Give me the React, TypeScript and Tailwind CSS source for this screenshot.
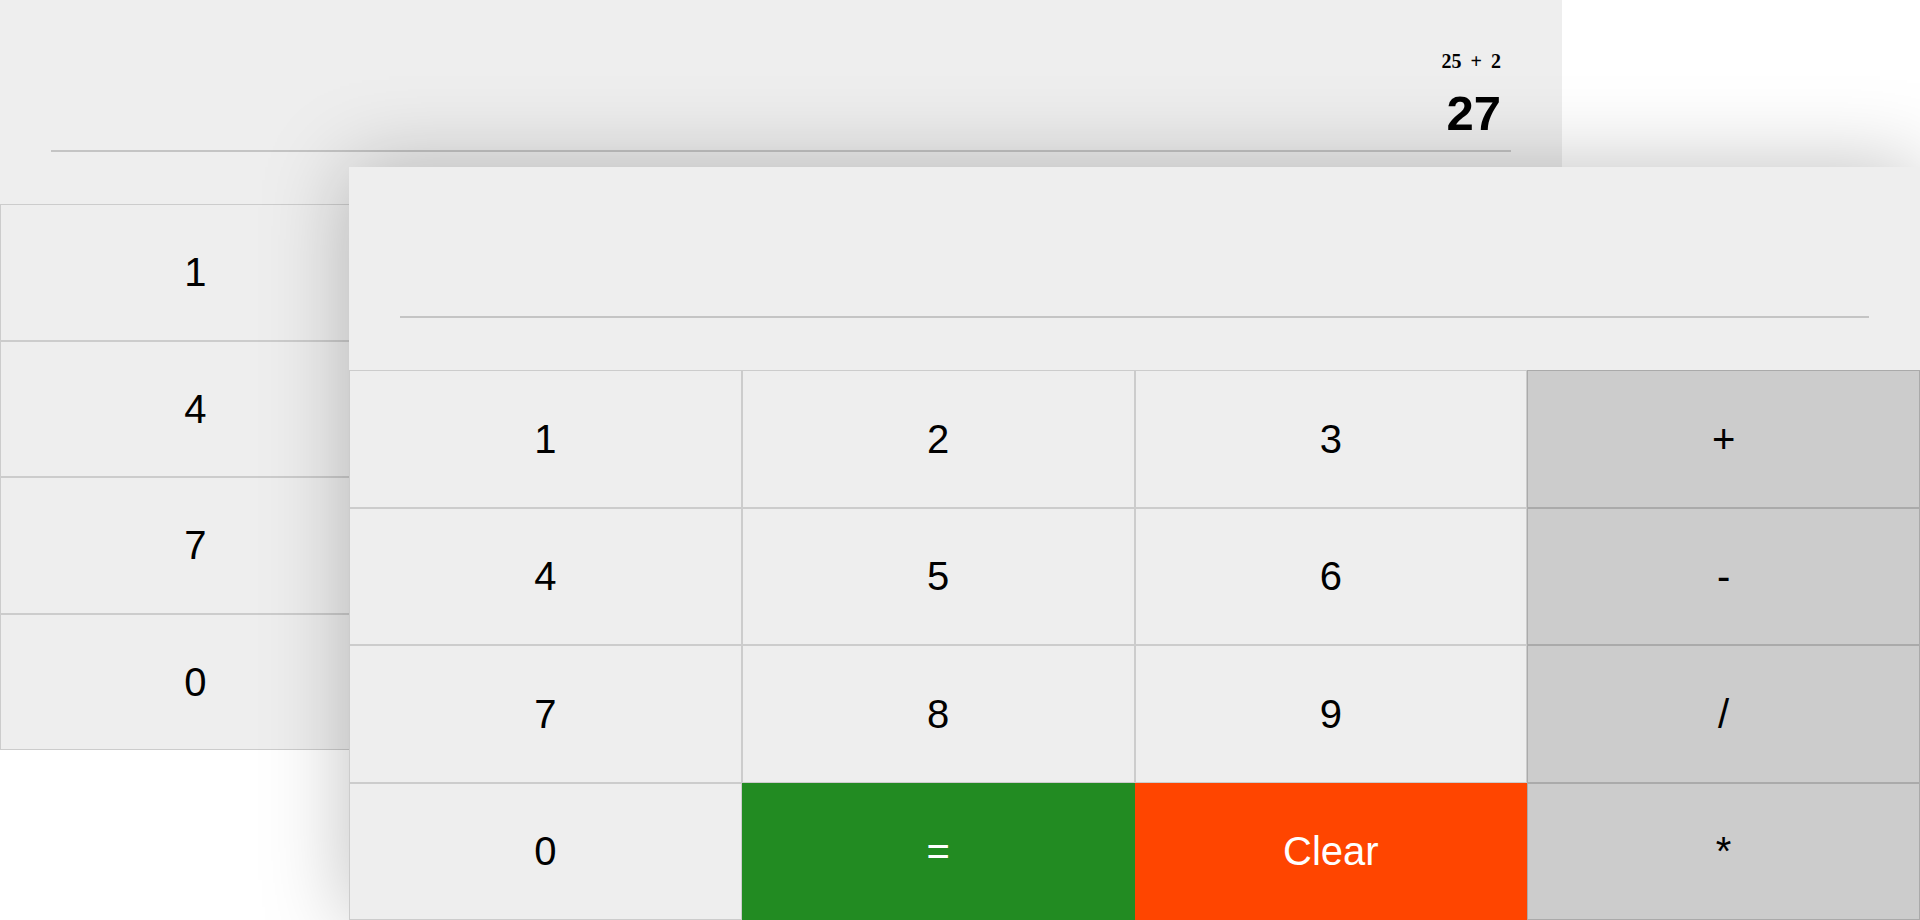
const KEYS = ["1", "2", "3", "+", "4", "5", "6", "-", "7", "8", "9", "/", "0", "=", "Clear", "*"];

const OPS = ["+", "-", "/", "*"];

function keyClass(key: string) {
  if (key === "=") return "bg-[#228b22] border-[#228b22] text-white";
  if (key === "Clear") return "bg-[#ff4500] border-[#ff4500] text-white";
  if (OPS.includes(key)) return "bg-[#cccccc] border-[#aaaaaa] text-black";
  return "bg-[#eeeeee] border-[#cccccc] text-black";
}

type CalculatorProps = {
  expression?: string;
  result?: string;
  displayHeight: string;
  rowHeight: string;
};

function Calculator({ expression, result, displayHeight, rowHeight }: CalculatorProps) {
  return (
    <div className="flex flex-col bg-[#eeeeee] font-['Liberation_Sans',Arial,sans-serif]">
      <div className={`flex flex-col justify-end px-[51px] pb-[52px] ${displayHeight}`}>
        {result && (
          <div className="mr-[10px] flex flex-col items-end">
            <div className="h-[20px] font-['Liberation_Serif','Times_New_Roman',serif] text-[20px] font-bold leading-none text-black [word-spacing:4px]">
              {expression}
            </div>
            <div className="mt-[18px] mb-[13px] h-[48px] text-[49px] font-bold leading-none text-black">
              {result}
            </div>
          </div>
        )}
        <div className="h-[2px] w-full bg-[#c4c4c4]" />
      </div>
      <div className="grid grid-cols-4">
        {KEYS.map((key) => (
          <button
            key={key}
            type="button"
            className={`flex items-center justify-center border text-[40px] leading-none ${rowHeight} ${keyClass(key)}`}
          >
            {key}
          </button>
        ))}
      </div>
    </div>
  );
}

export default function App() {
  return (
    <div className="relative h-[920px] w-[1920px] overflow-hidden bg-white">
      <div className="absolute left-0 top-0 w-[1562px]">
        <Calculator expression="25 + 2" result="27" displayHeight="h-[204px]" rowHeight="h-[136.5px]" />
      </div>
      <div className="absolute left-[349px] top-[167px] w-[1571px] shadow-[0_0_80px_rgba(0,0,0,0.25)]">
        <Calculator displayHeight="h-[203px]" rowHeight="h-[137.5px]" />
      </div>
    </div>
  );
}
